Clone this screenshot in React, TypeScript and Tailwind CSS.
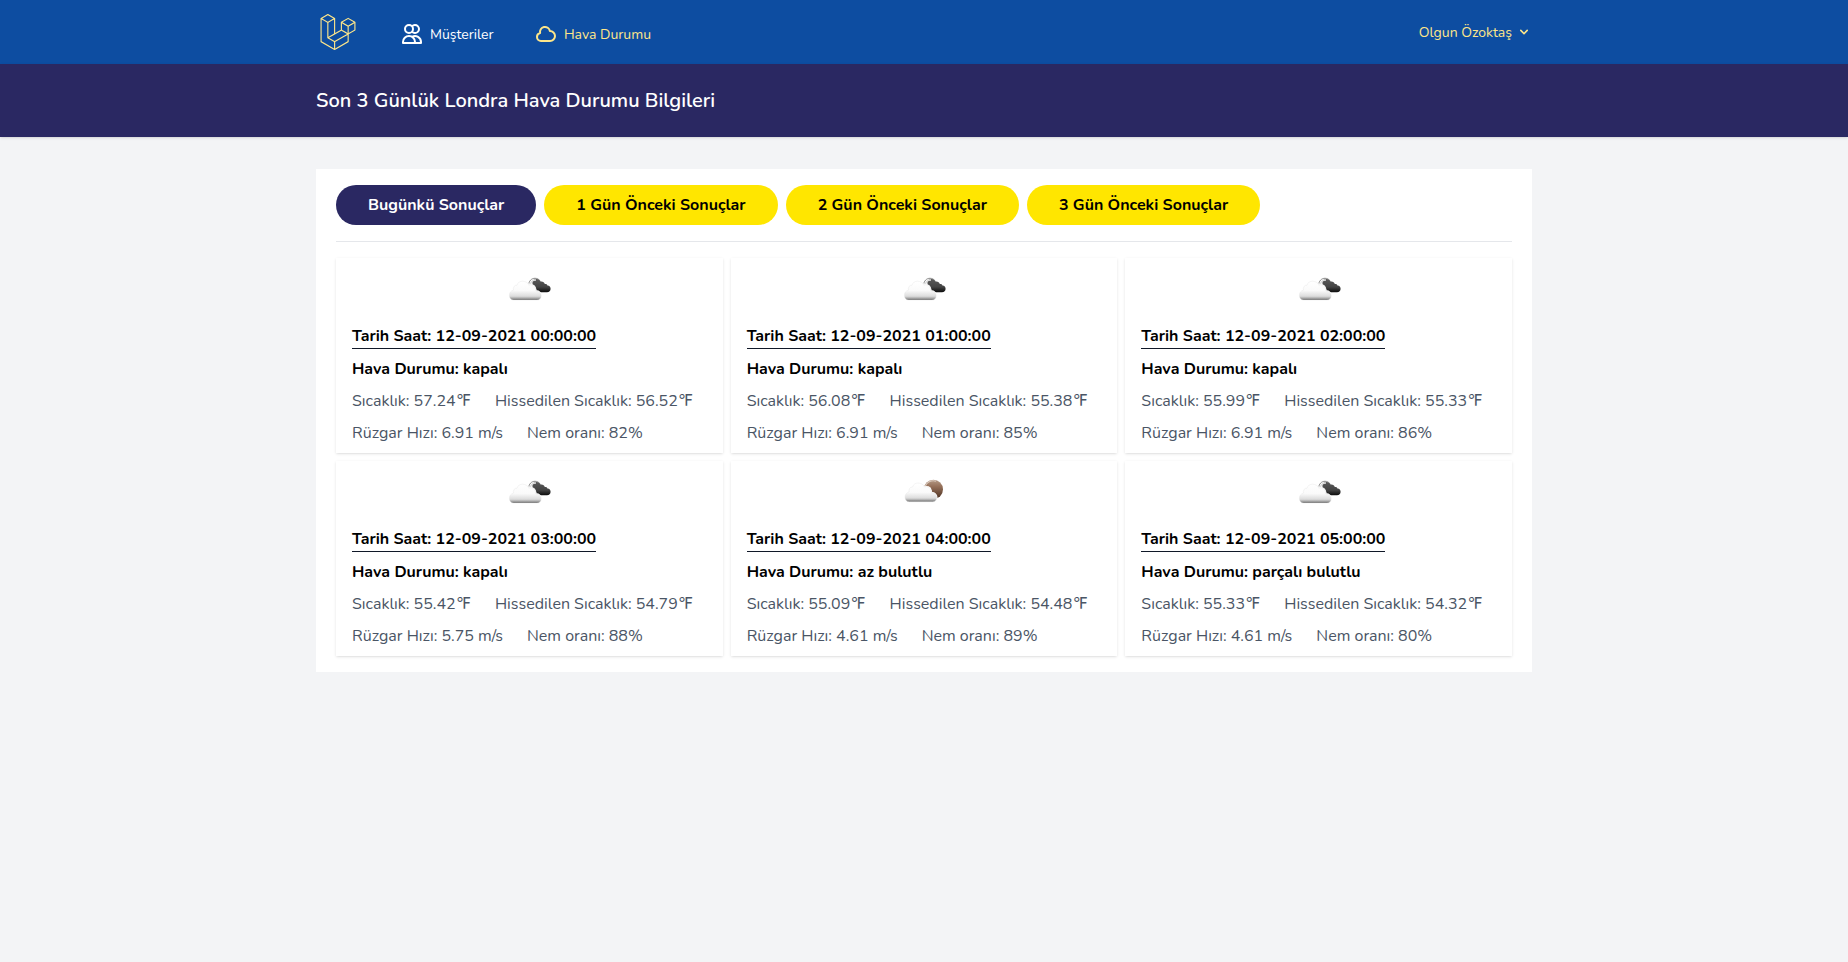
import { HiOutlineCloud, HiOutlineUsers } from "react-icons/hi";
import { SiLaravel } from "react-icons/si";

type Sky = "broken" | "few";

interface Reading {
  time: string;
  status: string;
  temp: string;
  feels: string;
  wind: string;
  humidity: string;
  sky: Sky;
}

const readings: Reading[] = [
  { time: "00:00:00", status: "kapalı", temp: "57.24", feels: "56.52", wind: "6.91", humidity: "82", sky: "broken" },
  { time: "01:00:00", status: "kapalı", temp: "56.08", feels: "55.38", wind: "6.91", humidity: "85", sky: "broken" },
  { time: "02:00:00", status: "kapalı", temp: "55.99", feels: "55.33", wind: "6.91", humidity: "86", sky: "broken" },
  { time: "03:00:00", status: "kapalı", temp: "55.42", feels: "54.79", wind: "5.75", humidity: "88", sky: "broken" },
  { time: "04:00:00", status: "az bulutlu", temp: "55.09", feels: "54.48", wind: "4.61", humidity: "89", sky: "few" },
  { time: "05:00:00", status: "parçalı bulutlu", temp: "55.33", feels: "54.32", wind: "4.61", humidity: "80", sky: "broken" },
];

const previousDays = [1, 2, 3];

const cloudPath =
  "M9.8 34C7 34 5.4 32 5.4 29.4C5.4 26.6 6.9 24.7 9.4 24.2C9 21.2 10.4 19 13 19.2C13.6 16.6 16 15.2 18.4 15.2C21.4 15.2 23.8 16.6 24.8 19.2C27.4 18.2 30.6 19.2 31.4 22.2C31.9 23.4 32 24.3 31.8 25C35 24.6 37.2 27 37.2 29.7C37.2 32.2 35.6 34 33 34Z";

function WeatherIcon({ sky }: { sky: Sky }) {
  const few = sky === "few";
  return (
    <svg width="50" height="50" viewBox="0 0 50 50" aria-hidden="true">
      <defs>
        <linearGradient id="cloudFill" x1="0" y1="0" x2="0" y2="1">
          <stop offset="0" stopColor="#ffffff" />
          <stop offset="0.5" stopColor="#fafafa" />
          <stop offset="0.8" stopColor="#dcdcdc" />
          <stop offset="0.91" stopColor="#a8a8a8" />
          <stop offset="1" stopColor="#5c5c5c" />
        </linearGradient>
        <linearGradient id="darkFill" x1="0" y1="0" x2="0" y2="1">
          <stop offset="0" stopColor="#5a5a5a" />
          <stop offset="0.6" stopColor="#444444" />
          <stop offset="1" stopColor="#0c0c0c" />
        </linearGradient>
        <linearGradient id="sunFill" x1="0" y1="0" x2="0" y2="1">
          <stop offset="0" stopColor="#b59a86" />
          <stop offset="0.35" stopColor="#957059" />
          <stop offset="1" stopColor="#4a2f20" />
        </linearGradient>
      </defs>
      {few ? (
        <>
          <circle cx="34.4" cy="20.4" r="9.6" fill="url(#sunFill)" />
          <path d="M26.2 17.2A8.8 8.8 0 0 1 37 12.2" fill="none" stroke="#d8c8bc" strokeWidth="1.1" />
        </>
      ) : (
        <>
          <path
            d="M28.5 15C29.6 13.6 31.4 12.9 33 13.1C34.7 13.2 36 14.2 36.6 15.6C38.6 15.2 40.4 16.2 40.8 18C42 17.8 43 18.3 43.4 19.4C45.3 19.2 46.6 20.8 46.6 22.8C46.6 24.8 45.2 26.2 43 26.2H32.5L28.5 19Z"
            fill="url(#darkFill)"
          />
          <path d="M24.6 19C24.8 15 27.6 12.2 31 12.3C33 12.3 34.6 13 35.4 14.2" fill="none" stroke="#7a7a7a" strokeWidth="0.9" />
          <path d="M26.2 19.6C26.2 16.4 28.6 14 32 14" fill="none" stroke="#dcdcdc" strokeWidth="1.5" />
        </>
      )}
      <g transform={few ? "translate(0.6 -1.2)" : undefined}>
        <path d={cloudPath} fill="none" stroke="#ffffff" strokeWidth="1.4" />
        <path d={cloudPath} fill="url(#cloudFill)" stroke="#e4e4e4" strokeWidth="0.4" />
      </g>
    </svg>
  );
}

function NavBar() {
  return (
    <nav className="h-16 bg-[#0d4da1]">
      <div className="mx-auto flex h-full max-w-[1280px] items-center px-8 text-sm text-[#fde68a]">
        <a href="#" className="ml-[3.5px]" aria-label="Laravel">
          <SiLaravel size={36} />
        </a>
        <a href="#" className="ml-[44.5px] flex items-center gap-1.5 pt-1 text-white">
          <HiOutlineUsers size={24} />
          <span className="pt-px leading-[21px]">Müşteriler</span>
        </a>
        <a href="#" className="ml-[40.4px] flex items-center gap-1.5 pt-1">
          <HiOutlineCloud size={24} />
          <span className="pt-px leading-[21px]">Hava Durumu</span>
        </a>
        <button className="ml-auto flex items-center gap-1">
          <span className="pt-px leading-[21px]">Olgun Özoktaş</span>
          <svg className="h-4 w-4 fill-current" viewBox="0 0 20 20">
            <path
              fillRule="evenodd"
              clipRule="evenodd"
              d="M5.293 7.293a1 1 0 011.414 0L10 10.586l3.293-3.293a1 1 0 111.414 1.414l-4 4a1 1 0 01-1.414 0l-4-4a1 1 0 010-1.414z"
            />
          </svg>
        </button>
      </div>
    </nav>
  );
}

function WeatherCard({ reading }: { reading: Reading }) {
  return (
    <article className="flex flex-col items-start gap-2 bg-white px-4 py-2 shadow">
      <div className="self-center">
        <WeatherIcon sky={reading.sky} />
      </div>
      <h3 className="border-b border-gray-900 font-bold text-black">Tarih Saat: 12-09-2021 {reading.time}</h3>
      <p className="font-bold text-black">Hava Durumu: {reading.status}</p>
      <p className="flex h-6 gap-6">
        <span>Sıcaklık: {reading.temp}℉</span>
        <span>Hissedilen Sıcaklık: {reading.feels}℉</span>
      </p>
      <p className="flex gap-6">
        <span>Rüzgar Hızı: {reading.wind} m/s</span>
        <span>Nem oranı: {reading.humidity}%</span>
      </p>
    </article>
  );
}

export default function App() {
  return (
    <div className="min-h-screen bg-gray-100 font-['Nunito','DejaVu_Sans',sans-serif] text-base text-gray-600 antialiased">
      <NavBar />
      <header className="bg-[#2a2862] shadow">
        <div className="mx-auto max-w-[1280px] px-8 py-6">
          <h2 className="text-xl leading-[25px] font-semibold text-white">Son 3 Günlük Londra Hava Durumu Bilgileri</h2>
        </div>
      </header>
      <main className="mx-auto max-w-[1280px] px-8 py-8">
        <section className="bg-white px-5 py-4">
          <div className="mb-4 flex gap-2 border-b border-gray-200 pb-4">
            <button className="rounded-full bg-[#2a2862] px-8 py-2 font-bold text-white">Bugünkü Sonuçlar</button>
            {previousDays.map((day) => (
              <button key={day} className="rounded-full bg-[#ffe600] px-8 py-2 font-bold text-black">
                {day} Gün Önceki Sonuçlar
              </button>
            ))}
          </div>
          <div className="grid grid-cols-3 gap-2">
            {readings.map((reading) => (
              <WeatherCard key={reading.time} reading={reading} />
            ))}
          </div>
        </section>
      </main>
    </div>
  );
}
